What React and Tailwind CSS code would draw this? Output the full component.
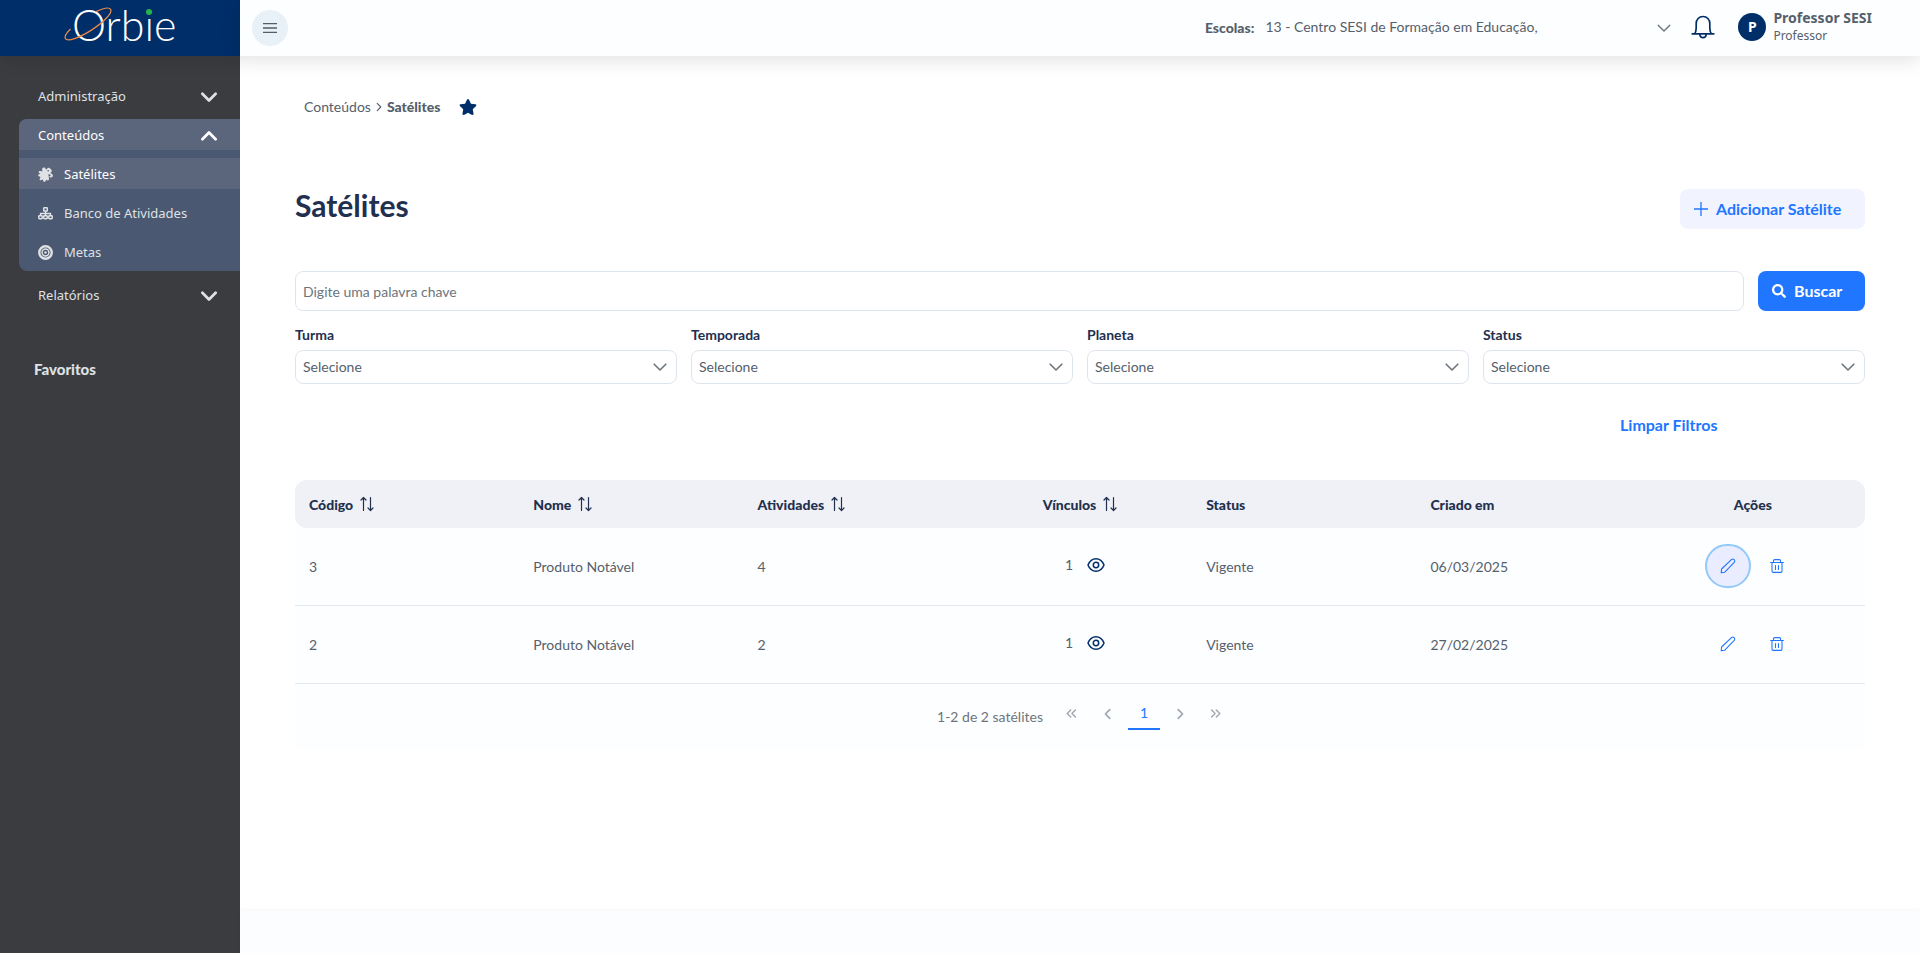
import React, { useState } from 'react';
import { FaSearch, FaStar } from 'react-icons/fa';

const COLUMNS = [
  { key: 'codigo', label: 'Código', sortable: true },
  { key: 'nome', label: 'Nome', sortable: true },
  { key: 'atividades', label: 'Atividades', sortable: true },
  { key: 'vinculos', label: 'Vínculos', sortable: true, center: true },
  { key: 'status', label: 'Status' },
  { key: 'criado', label: 'Criado em' },
  { key: 'acoes', label: 'Ações', center: true },
];

const ROWS = [
  { codigo: 3, nome: 'Produto Notável', atividades: 4, vinculos: 1, status: 'Vigente', criado: '06/03/2025' },
  { codigo: 2, nome: 'Produto Notável', atividades: 2, vinculos: 1, status: 'Vigente', criado: '27/02/2025' },
];

const FILTERS = ['Turma', 'Temporada', 'Planeta', 'Status'];

const SatelliteIcon = () => (
  <svg viewBox="0 0 15 15" className="w-[15px] h-[15px]" fill="currentColor" aria-hidden="true">
    <path d="M5 .8c1-.6 2.200-.2 2.600.9l.5 1.100 1.100-1.400c.8-.9 2.300-.9 3 .1l1.300 1.600c.5.800.3 1.600-.4 2.200l-.7.8 1.100.6c1.200.5 1.700 1.700 1.200 2.700-.6 1.100-1.800 1.300-2.900.8l-1.300-.6.5 2c.2 1-.3 1.800-1.200 1.900-.7.1-1.300-.3-1.700-1l-.5 1.600c-.3.900-1.500 1.100-2 .3l-.9-1.800-1.900.6c-.8.2-1.500-.7-1.100-1.400l.9-1.900-1.800-.6c-.9-.3-1-1.500-.2-1.900l1.900-.8-1.300-.6c-.7-.4-.8-1.300-.2-1.700.4-.3 1.100-.3 2.300 0l1.100-.1-.300-1.200C3.900 2 4.200 1.300 5 .8Z" />
    <circle cx="11.400" cy="8.400" r="1.100" fill="#5b667d" />
    <circle cx="10.200" cy="3.800" r=".8" fill="#5b667d" />
  </svg>
);

const TreeIcon = () => (
  <svg viewBox="0 0 15 15" className="w-[15px] h-[15px]" fill="none" stroke="currentColor" strokeWidth="1.500" aria-hidden="true">
    <rect x="5.700" y="1.700" width="3.600" height="3.300" rx=".6" />
    <path d="M7.500 5v4.500M2.600 9.500V7.400h9.800v2.100" />
    <rect x=".8" y="9.700" width="3.400" height="3" rx=".6" />
    <rect x="5.800" y="9.700" width="3.400" height="3" rx=".6" />
    <rect x="10.800" y="9.700" width="3.400" height="3" rx=".6" />
  </svg>
);

const TargetIcon = () => (
  <svg viewBox="0 0 15 15" className="w-[15px] h-[15px]" fill="none" stroke="currentColor" aria-hidden="true">
    <circle cx="7.500" cy="7.500" r="6.200" strokeWidth="2.400" />
    <circle cx="7.500" cy="7.500" r="3.400" strokeWidth="1.500" />
    <circle cx="7.500" cy="7.500" r="1.300" fill="currentColor" stroke="none" />
  </svg>
);

const SUBMENU = [
  { label: 'Satélites', icon: SatelliteIcon, active: true },
  { label: 'Banco de Atividades', icon: TreeIcon },
  { label: 'Metas', icon: TargetIcon },
];

const Chevron = ({ className, width = 1.2, d = 'M1.2 4.2 7 10l5.8-5.8' }) => (
  <svg viewBox="0 0 14 14" className={className} fill="none" stroke="currentColor" strokeWidth={width} strokeLinecap="round" strokeLinejoin="round" aria-hidden="true">
    <path d={d} />
  </svg>
);

const SortIcon = () => (
  <svg viewBox="0 0 14 16" className="w-[14px] h-4 mb-[2px]" fill="none" stroke="currentColor" strokeWidth="1.2" strokeLinecap="round" strokeLinejoin="round" aria-hidden="true">
    <path d="M3.5 14.5V1.5M1 4l2.5-2.5L6 4M10.5 1.5v13M8 12l2.5 2.5L13 12" />
  </svg>
);

const EyeIcon = () => (
  <svg viewBox="0 0 18 16" className="w-[18px] h-4" fill="none" stroke="currentColor" strokeWidth="1.5" aria-hidden="true">
    <path d="M1 8c1.6-4 4.600-6.300 8-6.300S15.400 4 17 8c-1.600 4-4.600 6.300-8 6.300S2.600 12 1 8Z" strokeLinejoin="round" />
    <circle cx="9" cy="8" r="2.700" />
  </svg>
);

const PencilIcon = () => (
  <svg viewBox="0 0 16 16" className="w-4 h-4" fill="none" stroke="currentColor" strokeWidth="1.1" strokeLinejoin="round" aria-hidden="true">
    <path d="M1.200 14.800 1.600 11 11.400 1.600c.7-.7 1.900-.7 2.700 0s.8 2 .1 2.800L4.800 14.200l-3.600.6Z" />
  </svg>
);

const TrashIcon = () => (
  <svg viewBox="0 0 14 14" className="w-[14px] h-[14px]" fill="none" stroke="currentColor" strokeWidth="1.1" strokeLinecap="round" strokeLinejoin="round" aria-hidden="true">
    <path d="M.6 3.500h12.800M2 3.500v8.600c0 .8.500 1.300 1.200 1.300h7.600c.7 0 1.200-.5 1.200-1.300V3.500M3.500 3.500V1.700c0-.7.500-1.100 1.100-1.100h4.800c.6 0 1.100.4 1.100 1.100v1.800M5.500 6.500v4M8.500 6.500v4" />
  </svg>
);

const BellIcon = () => (
  <svg viewBox="0 0 24 24" className="w-6 h-6" fill="none" stroke="currentColor" strokeWidth="1.700" strokeLinecap="round" strokeLinejoin="round" aria-hidden="true">
    <path d="M1.200 18.800h21.600M3.800 18.800c1-1.600 1.400-3.500 1.400-6V8.500c0-4 2.800-7 6.800-7s6.800 3 6.800 7v4.300c0 2.500.4 4.400 1.400 6" />
    <path d="M8.800 19.500c.2 2 1.500 3.200 3.200 3.200s3-1.200 3.200-3.200" />
  </svg>
);

const Logo = () => (
  <svg viewBox="0 0 120 56" className="w-[120px] h-14" role="img" aria-label="Orbie">
    <text x="12" y="41" fill="#ffffff" fontFamily="Lato, sans-serif" fontWeight="300" fontSize="43">Orbie</text>
    <circle cx="89" cy="12" r="3" fill="#27b24a" />
    <ellipse cx="28" cy="24" rx="27" ry="7" transform="rotate(-33 28 24)" fill="none" stroke="#e8894a" strokeWidth="1.300" pathLength="100" strokeDasharray="60 26 14 0" />
  </svg>
);

const Sidebar = () => (
  <aside className="w-60 shrink-0 bg-[#3a3c40] text-[#dfe1e5] flex flex-col font-['Noto_Sans',sans-serif] text-[13px]">
    <div className="h-14 bg-[#002e69] flex items-center justify-center shadow-[0_4px_16px_rgba(0,0,0,0.12)]">
      <Logo />
    </div>
    <nav className="pt-6 flex flex-col gap-2">
      <button className="h-[31px] pt-[2px] pl-[38px] pr-[23px] flex items-center justify-between">
        Administração
        <Chevron className="w-4 h-4" width={2.4} />
      </button>
      <div className="ml-[19px] pb-1 rounded-l-lg overflow-hidden bg-[#4a5871] flex flex-col gap-2">
        <button className="h-[31px] pt-[2px] pl-[19px] pr-[23px] flex items-center justify-between bg-[#5b667d] text-white">
          Conteúdos
          <Chevron className="w-4 h-4" width={2.4} d="M1.200 9.800 7 4l5.800 5.800" />
        </button>
        {SUBMENU.map(({ label, icon: Icon, active }) => (
          <a
            key={label}
            href="#"
            className={`h-[31px] pt-[2px] pl-[19px] flex items-center gap-[11px] ${active ? 'bg-[#5b667d] text-white' : ''}`}
          >
            <span className="text-[#dfe1e5]">
              <Icon />
            </span>
            {label}
          </a>
        ))}
      </div>
      <button className="h-[31px] pt-[2px] pl-[38px] pr-[23px] flex items-center justify-between">
        Relatórios
        <Chevron className="w-4 h-4" width={2.4} />
      </button>
    </nav>
    <h2 className="mt-12 pl-[34px] font-['Lato',sans-serif] font-black text-[15px] leading-[22px]">Favoritos</h2>
  </aside>
);

const Header = () => (
  <header className="h-14 shrink-0 bg-[#fdfeff] pl-3 pr-12 flex items-center justify-between shadow-[0_4px_20px_rgba(0,0,0,0.12)]">
    <button aria-label="Menu" className="w-9 h-9 rounded-full bg-[#e8f0f8] flex items-center justify-center text-[#555b63]">
      <svg viewBox="0 0 14 10" className="w-[14px] h-[10px]" stroke="currentColor" strokeWidth="1.300" aria-hidden="true">
        <path d="M0 .7h14M0 5h14M0 9.300h14" />
      </svg>
    </button>
    <div className="flex items-center pb-[2px]">
      <label htmlFor="escolas" className="pt-[2px] font-['Lato',sans-serif] font-black text-sm text-[#55606b]">Escolas:</label>
      <div className="relative ml-[11px] w-[406px]">
        <select id="escolas" className="appearance-none block w-full text-sm text-[#55606b] pr-8">
          <option>13 - Centro SESI de Formação em Educação,</option>
        </select>
        <Chevron className="w-[14px] h-[14px] absolute right-0 top-1 text-[#6c757d] pointer-events-none" width={1.4} />
      </div>
      <button aria-label="Notificações" className="ml-5 text-[#002e69]">
        <BellIcon />
      </button>
      <span className="ml-[23px] w-7 h-7 rounded-full bg-[#002e69] text-white text-sm font-bold font-['Noto_Sans',sans-serif] flex items-center justify-center">P</span>
      <div className="ml-[7px] text-[#55606b] font-['Noto_Sans',sans-serif]">
        <div className="font-bold text-sm leading-[18px]">Professor SESI</div>
        <div className="text-xs leading-[18px]">Professor</div>
      </div>
    </div>
  </header>
);

const Filters = () => (
  <form className="mt-[42px]" onSubmit={(e) => e.preventDefault()}>
    <div className="flex gap-[14px]">
      <input
        type="text"
        aria-label="Digite uma palavra chave"
        placeholder="Digite uma palavra chave"
        className="flex-1 h-10 px-[7px] rounded-lg border border-[#dfe5ee] text-sm text-[#55606b] placeholder:text-[#6c757d]"
      />
      <button className="h-10 w-[107px] pl-[14px] rounded-lg bg-[#2176ff] text-white font-bold flex items-center gap-2">
        <FaSearch className="w-[14px] h-[14px]" />
        Buscar
      </button>
    </div>
    <div className="mt-[14px] grid grid-cols-4 gap-[14px]">
      {FILTERS.map((name) => (
        <div key={name}>
          <label htmlFor={name} className="block text-sm font-bold text-[#22304f] leading-5">{name}</label>
          <div className="relative mt-[5px]">
            <select id={name} className="appearance-none w-full h-[34px] px-[7px] rounded-lg border border-[#dfe5ee] text-sm text-[#55606b] bg-white">
              <option>Selecione</option>
            </select>
            <Chevron className="w-[14px] h-[14px] absolute right-[10px] top-[10px] text-[#6c757d] pointer-events-none" width={1.6} />
          </div>
        </div>
      ))}
    </div>
    <div className="mt-[29px] flex justify-end">
      <div className="w-1/4 flex justify-center">
        <button type="reset" className="font-bold text-[#2176ff] leading-6">Limpar Filtros</button>
      </div>
    </div>
  </form>
);

const SatelliteTable = () => {
  const [selected] = useState(3);

  return (
    <section className="mt-[43px] bg-[#fdfeff]">
      <table className="w-full table-fixed text-sm text-left text-[#55606b] border-separate border-spacing-0">
        <thead>
          <tr className="h-12 text-[#22304f]">
            {COLUMNS.map((col) => (
              <th key={col.key} className="px-[14px] pt-[2px] font-black bg-[#f0f1f7] first:rounded-l-xl last:rounded-r-xl">
                <div className={`flex items-center gap-[7px] ${col.center ? 'justify-center' : ''}`}>
                  {col.label}
                  {col.sortable && <SortIcon />}
                </div>
              </th>
            ))}
          </tr>
        </thead>
        <tbody>
          {ROWS.map((row) => (
            <tr key={row.codigo} className="h-[78px] [&>td]:px-[14px] [&>td]:border-b [&>td]:border-[#e4e8ee]">
              <td>{row.codigo}</td>
              <td>{row.nome}</td>
              <td>{row.atividades}</td>
              <td>
                <div className="flex items-center justify-center gap-[14px] pl-[10px] pb-[3px]">
                  {row.vinculos}
                  <button aria-label="Ver vínculos" className="text-[#002e69]">
                    <EyeIcon />
                  </button>
                </div>
              </td>
              <td>{row.status}</td>
              <td>{row.criado}</td>
              <td>
                <div className="flex items-center justify-center gap-[3px] pb-[2px] text-[#2176ff]">
                  <button
                    aria-label="Editar"
                    className={`w-[46px] h-11 rounded-[22px] flex items-center justify-center ${
                      row.codigo === selected ? 'bg-[#eaecff] border-2 border-[#90caf9]' : ''
                    }`}
                  >
                    <PencilIcon />
                  </button>
                  <button aria-label="Excluir" className="w-[46px] h-11 flex items-center justify-center">
                    <TrashIcon />
                  </button>
                </div>
              </td>
            </tr>
          ))}
        </tbody>
      </table>

      <div className="h-[65px] pl-[9px] flex items-center justify-center text-sm text-[#6c757d]">
        <span className="mr-[13px]">1-2 de 2 satélites</span>
        <div className="flex items-center gap-1 pb-[6px] text-[#a0a7b0]">
          <button aria-label="Primeira página" className="w-8 h-8 flex items-center justify-center">
            <Chevron className="w-[11px] h-[11px]" width={1.8} d="M6 2.500 1.500 7 6 11.500M12 2.500 7.500 7l4.500 4.500" />
          </button>
          <button aria-label="Página anterior" className="w-8 h-8 flex items-center justify-center">
            <Chevron className="w-3 h-3" width={2} d="M9 2 4 7l5 5" />
          </button>
          <button className="w-8 h-8 border-b-2 border-[#2176ff] text-[#2176ff]">1</button>
          <button aria-label="Próxima página" className="w-8 h-8 flex items-center justify-center">
            <Chevron className="w-3 h-3" width={2} d="M5 2l5 5-5 5" />
          </button>
          <button aria-label="Última página" className="w-8 h-8 flex items-center justify-center">
            <Chevron className="w-[11px] h-[11px]" width={1.8} d="M2 2.500 6.500 7 2 11.500M8 2.500l4.500 4.500L8 11.500" />
          </button>
        </div>
      </div>
    </section>
  );
};

export default function App() {
  return (
    <div className="min-h-screen flex bg-white font-['Lato',sans-serif] text-base">
      <Sidebar />
      <div className="flex-1 min-w-0 flex flex-col">
        <Header />
        <main className="flex-1 px-[55px] pt-10">
          <nav className="pl-[9px] h-[22px] flex items-center text-sm text-[#55606b]">
            <a href="#">Conteúdos</a>
            <Chevron className="w-[10px] h-[10px] mx-[3px]" width={1.600} d="M4.500 2l5 5-5 5" />
            <a href="#" className="font-black">Satélites</a>
            <FaStar className="ml-[19px] w-[18px] h-[18px] text-[#002e69]" />
          </nav>

          <div className="mt-[71px] flex items-start justify-between">
            <h1 className="text-[30px] leading-8 font-bold text-[#22304f]">Satélites</h1>
            <button className="h-10 w-[185px] pl-[14px] rounded-lg bg-[#f1f4ff] text-[#2176ff] font-bold flex items-center gap-2">
              <svg viewBox="0 0 14 14" className="w-[14px] h-[14px]" stroke="currentColor" strokeWidth="1.300" aria-hidden="true">
                <path d="M7 0v14M0 7h14" />
              </svg>
              Adicionar Satélite
            </button>
          </div>

          <Filters />
          <SatelliteTable />
        </main>
        <footer className="h-[42px] shrink-0 bg-[#fcfdff] shadow-[0_-1px_4px_rgba(0,0,0,0.04)]" />
      </div>
    </div>
  );
}
